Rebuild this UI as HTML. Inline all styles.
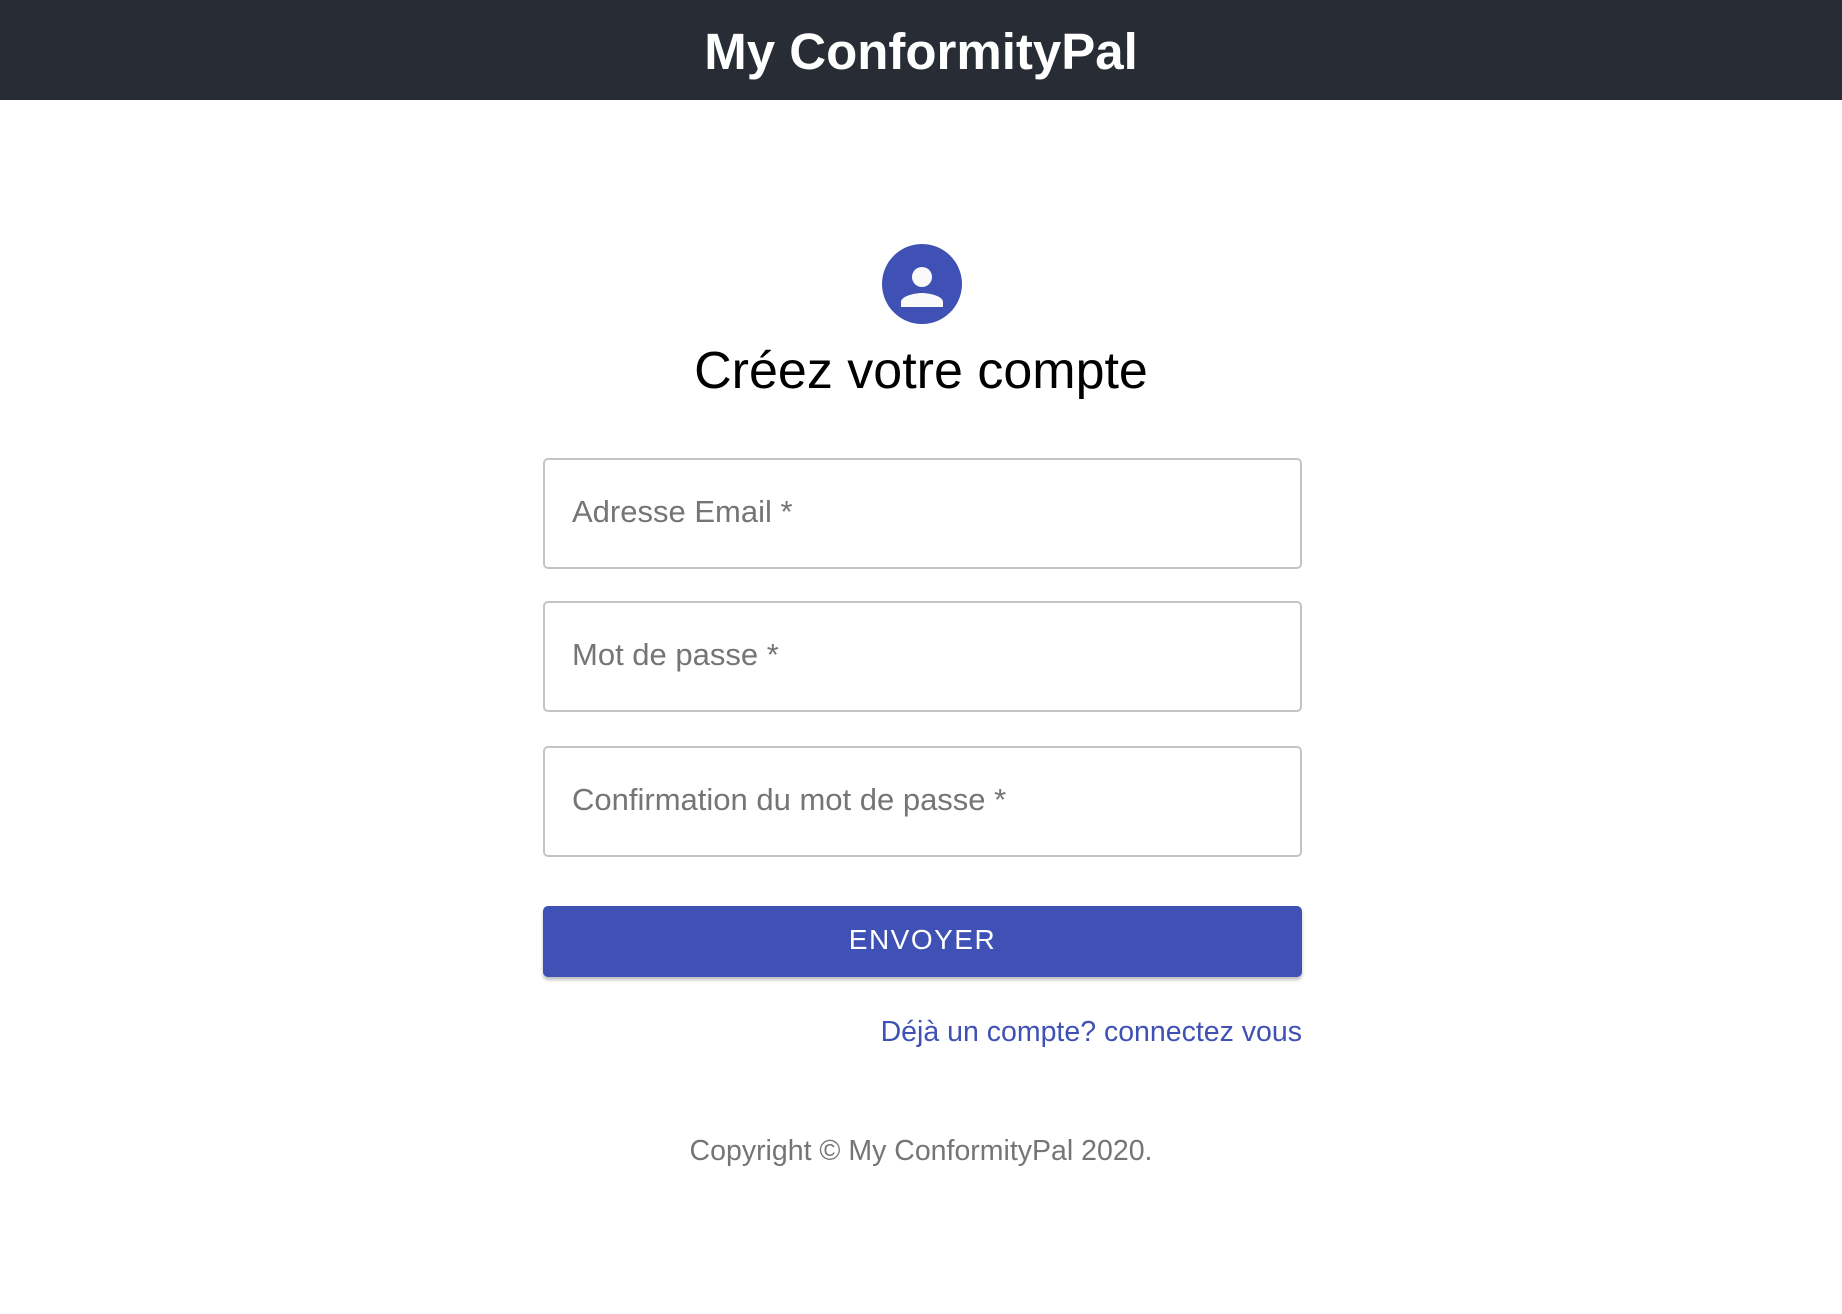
<!DOCTYPE html>
<html><head><meta charset="utf-8"><style>
*{margin:0;padding:0;box-sizing:border-box}
body{width:1842px;height:1314px;background:#fff;font-family:"Liberation Sans",sans-serif;position:relative;overflow:hidden}
.hdr{position:absolute;left:0;top:0;width:1842px;height:100px;background:#282c34;color:#fff;font-weight:bold;font-size:51px;text-align:center;line-height:104px}
.av{position:absolute;left:882px;top:244px;width:80px;height:80px;border-radius:50%;background:#3f51b5}
h1{position:absolute;left:0;width:1842px;top:341px;text-align:center;font-weight:normal;font-size:52px;line-height:60px;color:#000}
.inp{position:absolute;left:543px;width:759px;height:111px;border:2px solid #c4c4c4;border-radius:5px;font-size:31px;color:#757575;padding-left:27px;line-height:104px}
.btn{position:absolute;left:543px;top:906px;width:759px;height:71px;background:#3f51b5;border-radius:5px;color:#fff;font-size:28px;text-align:center;line-height:67px;letter-spacing:1.5px;box-shadow:0 3px 3px rgba(0,0,0,.25)}
.lnk{position:absolute;right:540px;top:1016px;font-size:28.5px;color:#3f51b5}
.cp{position:absolute;left:0;width:1842px;top:1135px;text-align:center;font-size:28.5px;color:#757575}
</style></head><body>
<div class="hdr">My ConformityPal</div>
<div class="av"><svg width="80" height="80" viewBox="0 0 80 80"><circle cx="40" cy="33" r="10" fill="#fafafa"/><path d="M19 63 v-5 c0-6 14-9 21-9 s21 3 21 9 v5z" fill="#fafafa"/></svg></div>
<h1>Créez votre compte</h1>
<div class="inp" style="top:458px">Adresse Email *</div>
<div class="inp" style="top:601px">Mot de passe *</div>
<div class="inp" style="top:746px">Confirmation du mot de passe *</div>
<div class="btn">ENVOYER</div>
<div class="lnk">Déjà un compte? connectez vous</div>
<div class="cp">Copyright © My ConformityPal 2020.</div>
</body></html>
